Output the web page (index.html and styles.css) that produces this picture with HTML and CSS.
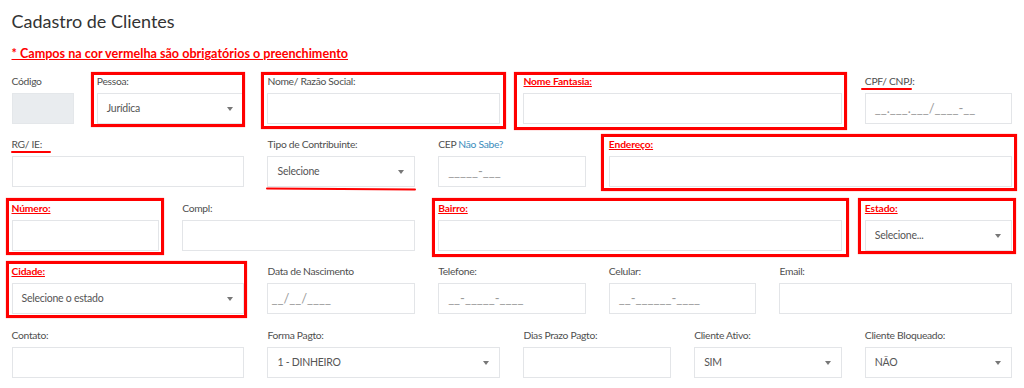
FILE: index.html
```html
<!DOCTYPE html>
<html lang="pt-BR">
<head>
<meta charset="utf-8">
<title>Cadastro de Clientes</title>
<link rel="stylesheet" href="styles.css">
</head>
<body>
<div class="page">
  <h1 class="title">Cadastro de Clientes</h1>
  <p class="note">* Campos na cor vermelha são obrigatórios o preenchimento</p>
  <form class="form">
    <div class="field span-1"><label>Código</label><div class="input disabled"></div></div>
    <div class="field span-2 hl hl-pessoa"><label>Pessoa:</label><div class="input select">Jurídica</div></div>
    <div class="field span-3 hl hl-nome"><label>Nome/ Razão Social:</label><div class="input"></div></div>
    <div class="field span-4 hl hl-fantasia"><label class="req">Nome Fantasia:</label><div class="input"></div></div>
    <div class="field span-2"><label class="mark mark-cpf">CPF/ CNPJ:</label><div class="input mask">__.___.___/____-__</div></div>

    <div class="field span-3"><label class="mark mark-rg">RG/ IE:</label><div class="input"></div></div>
    <div class="field span-2 under"><label>Tipo de Contribuinte:</label><div class="input select">Selecione</div></div>
    <div class="field span-2"><label>CEP <a class="link" href="#">Não Sabe?</a></label><div class="input mask">_____-___</div></div>
    <div class="field span-5 hl hl-endereco"><label class="req">Endereço:</label><div class="input"></div></div>

    <div class="field span-2 hl hl-numero"><label class="req">Número:</label><div class="input"></div></div>
    <div class="field span-3"><label>Compl:</label><div class="input"></div></div>
    <div class="field span-5 hl hl-bairro"><label class="req">Bairro:</label><div class="input"></div></div>
    <div class="field span-2 hl hl-estado"><label class="req">Estado:</label><div class="input select">Selecione...</div></div>

    <div class="field span-3 hl hl-cidade"><label class="req">Cidade:</label><div class="input select">Selecione o estado</div></div>
    <div class="field span-2"><label>Data de Nascimento</label><div class="input mask mask-date">__/__/____</div></div>
    <div class="field span-2"><label>Telefone:</label><div class="input mask">__-_____-____</div></div>
    <div class="field span-2"><label>Celular:</label><div class="input mask">__-______-____</div></div>
    <div class="field span-3"><label>Email:</label><div class="input"></div></div>

    <div class="field span-3"><label>Contato:</label><div class="input"></div></div>
    <div class="field span-3"><label>Forma Pagto:</label><div class="input select">1 - DINHEIRO</div></div>
    <div class="field span-2"><label>Dias Prazo Pagto:</label><div class="input"></div></div>
    <div class="field span-2"><label>Cliente Ativo:</label><div class="input select">SIM</div></div>
    <div class="field span-2"><label>Cliente Bloqueado:</label><div class="input select">NÃO</div></div>
  </form>
</div>
</body>
</html>
```

FILE: styles.css
```css
* { box-sizing: border-box; }

html, body {
  margin: 0;
  padding: 0;
  background: #ffffff;
}

body {
  font-family: "Lato", "Open Sans", "Liberation Sans", sans-serif;
  color: #555555;
}

.page {
  width: 1024px;
  padding: 9px 11.5px 0;
}

.title {
  margin: 0;
  font-size: 18px;
  font-weight: 400;
  line-height: 24px;
  color: #333333;
}

.note {
  margin: 13px 0 0;
  font-size: 12.6px;
  font-weight: 700;
  line-height: 16px;
  color: #ff0000;
  text-decoration: underline;
}

.form {
  display: grid;
  grid-template-columns: repeat(12, 1fr);
  column-gap: 23px;
  row-gap: 12.6px;
  margin-top: 10.5px;
}

.span-1 { grid-column: span 1; }
.span-2 { grid-column: span 2; }
.span-3 { grid-column: span 3; }
.span-4 { grid-column: span 4; }
.span-5 { grid-column: span 5; }

.field {
  position: relative;
  display: flex;
  flex-direction: column;
  gap: 4px;
}

.field label {
  display: block;
  font-size: 10.3px;
  letter-spacing: -0.3px;
  line-height: 16px;
  color: #4f4f4f;
  white-space: nowrap;
}

.field label.req {
  color: #ff0000;
  font-weight: 700;
  letter-spacing: -0.15px;
  text-decoration: underline;
}

.link {
  color: #3c8dbc;
  text-decoration: none;
}

.input {
  position: relative;
  height: 31px;
  border: 1px solid #e3e5e8;
  background: #ffffff;
  font-size: 10.5px;
  letter-spacing: -0.25px;
  line-height: 29px;
  padding: 0 9px;
  color: #555555;
  white-space: nowrap;
}

.input.disabled {
  background: #e9ecef;
  border-color: #e4e7ea;
}

.input.mask {
  color: #9a9a9a;
  font-size: 13px;
  letter-spacing: 0;
  line-height: 27px;
  padding-top: 1px;
}

.input.mask-date {
  padding-left: 3px;
}

.input.select::after {
  content: "";
  position: absolute;
  right: 10px;
  top: 13px;
  border-left: 3.5px solid transparent;
  border-right: 3.5px solid transparent;
  border-top: 4px solid #777777;
}

/* red annotation boxes drawn over highlighted fields */
.hl::after {
  content: "";
  position: absolute;
  top: -2px;
  right: -5px;
  bottom: -4px;
  left: -6px;
  border: 3px solid #ff0000;
  box-shadow: 0 0 1px rgba(255, 0, 0, 0.6);
  pointer-events: none;
}

.hl-pessoa::after { top: -1px; right: -1px; bottom: -3px; left: -6px; }
.hl-nome::after { top: -1px; right: -6px; bottom: -5px; left: -6px; }
.hl-fantasia::after { top: -1px; right: -5px; bottom: -6px; left: -9px; }
.hl-endereco::after { top: -2px; right: -5px; bottom: -4px; left: -8px; }
.hl-numero::after { top: -2px; right: -5px; bottom: -4px; left: -6px; }
.hl-bairro::after { top: -2px; right: -7px; bottom: -6px; left: -6px; }
.hl-estado::after { top: -2px; right: -4px; bottom: -3px; left: -7px; }
.hl-cidade::after { top: -2px; right: -3px; bottom: -4px; left: -6px; }

/* red underline marks */
.mark {
  position: relative;
  align-self: flex-start;
}

.mark::after {
  content: "";
  position: absolute;
  left: -4px;
  bottom: -1px;
  height: 2px;
  background: #ff0000;
  border-radius: 1px;
}

.mark-cpf::after { width: 51px; }
.mark-rg::after { left: -1px; width: 40px; }

.under::after {
  content: "";
  position: absolute;
  left: -1px;
  right: -1px;
  bottom: -3px;
  height: 2px;
  background: #ff0000;
  border-radius: 1px;
  transform: rotate(0.3deg);
}
```
